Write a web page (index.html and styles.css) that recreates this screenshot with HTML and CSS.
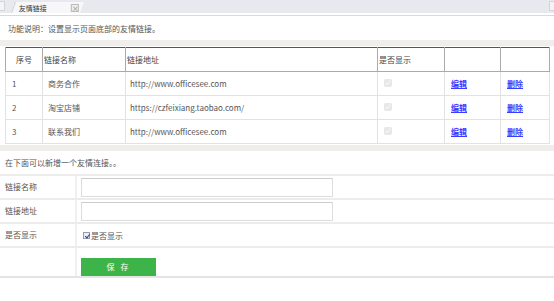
FILE: index.html
```html
<!DOCTYPE html>
<html lang="zh-CN">
<head>
  <meta charset="UTF-8" />
  <title>友情链接</title>
  <link rel="stylesheet" href="styles.css">
</head>
<body>
  <div class="tabbar">
    <span class="tab-edge"></span>
    <div class="tab">
      <span class="tab-title">友情链接</span>
      <span class="tab-close">&times;</span>
    </div>
    <span class="tab-edge right"></span>
  </div>
  <div class="tabline"></div>

  <p class="intro">功能说明：设置显示页面底部的友情链接。</p>

  <div class="list-box">
    <table class="list">
      <colgroup>
        <col class="w-no">
        <col class="w-name">
        <col class="w-url">
        <col class="w-show">
        <col class="w-edit">
        <col>
      </colgroup>
      <thead>
        <tr>
          <th class="c-no">序号</th>
          <th>链接名称</th>
          <th>链接地址</th>
          <th>是否显示</th>
          <th></th>
          <th></th>
        </tr>
      </thead>
      <tbody>
        <tr>
          <td>1</td>
          <td class="name">商务合作</td>
          <td class="url">http://www.officesee.com</td>
          <td class="show"><input type="checkbox" checked disabled></td>
          <td><a href="#">编辑</a></td>
          <td><a href="#">删除</a></td>
        </tr>
        <tr>
          <td>2</td>
          <td class="name">淘宝店铺</td>
          <td class="url">https://czfeixiang.taobao.com/</td>
          <td class="show"><input type="checkbox" checked disabled></td>
          <td><a href="#">编辑</a></td>
          <td><a href="#">删除</a></td>
        </tr>
        <tr>
          <td>3</td>
          <td class="name">联系我们</td>
          <td class="url">http://www.officesee.com</td>
          <td class="show"><input type="checkbox" checked disabled></td>
          <td><a href="#">编辑</a></td>
          <td><a href="#">删除</a></td>
        </tr>
      </tbody>
    </table>
  </div>

  <p class="tip">在下面可以新增一个友情连接。。</p>

  <div class="form">
    <div class="form-row">
      <label class="form-label">链接名称</label>
      <div class="form-field"><input type="text" class="text"></div>
    </div>
    <div class="form-row">
      <label class="form-label">链接地址</label>
      <div class="form-field"><input type="text" class="text"></div>
    </div>
    <div class="form-row">
      <label class="form-label">是否显示</label>
      <div class="form-field">
        <label class="check"><input type="checkbox" checked>是否显示</label>
      </div>
    </div>
    <div class="form-row last">
      <span class="form-label"></span>
      <div class="form-field"><button class="save">保 存</button></div>
    </div>
  </div>
</body>
</html>
```

FILE: styles.css
```css
body {
  margin: 0;
  font-family: "Microsoft YaHei", "Noto Sans CJK SC", "Liberation Sans", sans-serif;
  font-size: 8px;
  color: #555;
  background: #fff;
}
.tabbar {
  height: 13px;
  background: #e8e8ef;
  display: flex;
  align-items: flex-end;
}
.tab-edge {
  width: 4px;
  height: 8px;
  margin: 0 0 2px 0;
  background: #f4f4f7;
  border: 1px solid #d4d4dc;
  border-left: none;
}
.tab-edge.right {
  margin-left: auto;
  border-left: 1px solid #d4d4dc;
  border-right: none;
}
.tab {
  margin-left: 6px;
  width: 68px;
  height: 11px;
  background: #f7f7fa;
  border-left: 1px solid #cfcfd8;
  transform: skewX(-20deg);
  transform-origin: bottom left;
  display: flex;
  align-items: center;
}
.tab-title,
.tab-close {
  transform: skewX(20deg);
}
.tab-title {
  margin-left: 5px;
  font-size: 7px;
  color: #333;
}
.tab-close {
  margin-left: auto;
  margin-right: 3px;
  width: 6px;
  height: 6px;
  line-height: 6px;
  font-size: 7px;
  text-align: center;
  color: #777;
  border: 1px solid #bbb;
  background: #eee;
}
.tabline {
  height: 1px;
  margin-top: 2px;
  background: #d9d9d9;
}
.intro {
  margin: 0;
  padding: 8px 8px 0;
  height: 16px;
  line-height: 9px;
}
.list-box {
  border-top: 6px solid #efeeeb;
  border-bottom: 6px solid #efeeeb;
  padding: 1px 4px 1px 5px;
}
.list {
  width: 100%;
  table-layout: fixed;
  border-collapse: collapse;
  border: 1px solid #555;
}
.w-no { width: 37px; }
.w-name { width: 83px; }
.w-url { width: 252px; }
.w-show { width: 67px; }
.w-edit { width: 56px; }
.list th {
  height: 23px;
  padding: 0 1px;
  font-weight: normal;
  text-align: left;
  color: #444;
  border: 1px solid #aaa;
  border-top: none;
}
.list th.c-no {
  text-align: center;
}
.list td {
  height: 23px;
  padding: 0 0 0 6px;
  border: 1px solid #e2e2e2;
}
.list td.name { padding-left: 5px; }
.list td.url { padding-left: 4px; }
.list td.show input {
  width: 8px;
  height: 8px;
  margin: 0;
  opacity: 0.5;
}
.list a {
  color: #3a3aff;
  font-weight: bold;
}
.tip {
  margin: 0;
  height: 23px;
  line-height: 23px;
  padding-left: 5px;
  border-bottom: 2px solid #ececec;
}
.form-row {
  display: flex;
  height: 22px;
  border-bottom: 2px solid #ececec;
}
.form-row.last {
  height: 28px;
  border-bottom: 2px solid #e4e4e4;
}
.form-label {
  width: 77px;
  padding-left: 5px;
  box-sizing: border-box;
  line-height: 22px;
  border-right: 2px solid #f0f0f0;
}
.form-field {
  display: flex;
  align-items: center;
  padding-left: 4px;
}
.text {
  width: 252px;
  height: 19px;
  box-sizing: border-box;
  border: 1px solid #ddd;
  border-top-color: #ccc;
  margin: 0;
  padding: 0 3px;
}
.check {
  display: flex;
  align-items: center;
}
.check input {
  appearance: none;
  width: 7px;
  height: 7px;
  margin: 0 1px 0 2px;
  border: 1px solid #8f9bb0;
  background: #eef0f5;
  position: relative;
}
.check input:checked::after {
  content: "";
  position: absolute;
  left: 2px;
  top: 0;
  width: 2px;
  height: 4px;
  border: solid #34456e;
  border-width: 0 1px 1px 0;
  transform: rotate(40deg);
}
.save {
  width: 75px;
  height: 18px;
  margin-top: 9px;
  border: none;
  background: #3cb44a;
  color: #fff;
  font-family: inherit;
  font-size: 8px;
  letter-spacing: 2px;
}
```
